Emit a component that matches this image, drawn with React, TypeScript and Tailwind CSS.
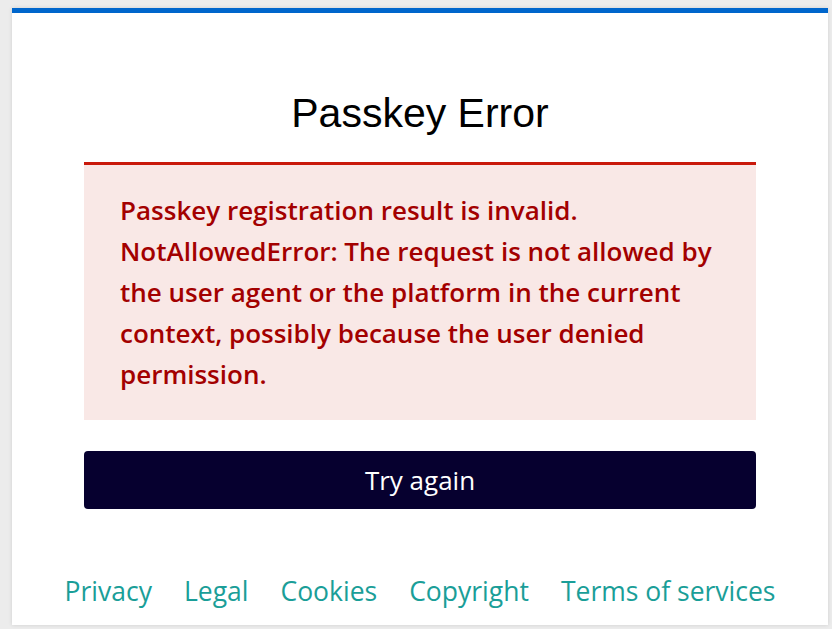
export default function App() {
  const links = ["Privacy", "Legal", "Cookies", "Copyright", "Terms of services"];
  return (
    <div className="min-h-screen bg-[#ececec] pl-3 pr-1 pt-2 pb-[3px] font-['Open_Sans',sans-serif]">
      <div className="w-[816px] bg-white border-t-[5px] border-[#0066cc] shadow-[0_0_4px_rgba(0,0,0,0.12)]">
        <h1 className="pt-[76px] text-center text-[41px] leading-[48px] text-black font-['Liberation_Sans',Arial,sans-serif]">
          Passkey Error
        </h1>
        <div className="mx-[72px] mt-[25px] border-t-[3px] border-[#c9190b] bg-[#f9e8e6] px-9 pt-[25px] pb-[25px]">
          <p className="text-[26px] leading-[41px] font-semibold text-[#a30000]">
            Passkey registration result is invalid. NotAllowedError: The request is not allowed by the user agent or
            the platform in the current context, possibly because the user denied permission.
          </p>
        </div>
        <div className="mx-[72px] mt-[31px]">
          <button className="h-[58px] w-full rounded-[4px] bg-[#06002f] text-[26px] text-white">Try again</button>
        </div>
        <div className="flex justify-center gap-8 pt-[62px] pb-[14px]">
          {links.map((l) => (
            <a key={l} className="text-[26.5px] leading-[40px] text-[#1a9e98]">
              {l}
            </a>
          ))}
        </div>
      </div>
    </div>
  );
}
